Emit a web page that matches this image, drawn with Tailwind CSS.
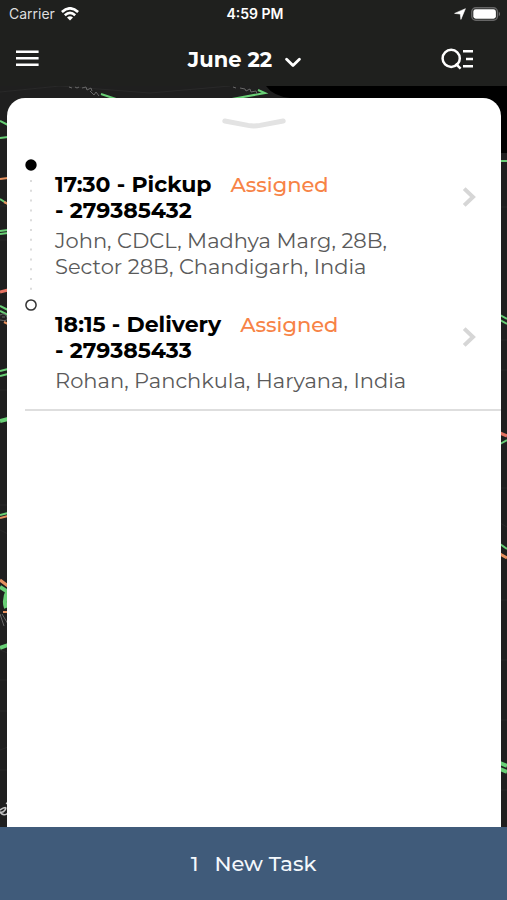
<!DOCTYPE html>
<html lang="en">
<head>
<meta charset="utf-8">
<meta name="viewport" content="width=device-width, initial-scale=1">
<title>Tasks – June 22</title>
<script src="https://cdn.jsdelivr.net/npm/@tailwindcss/browser@4"></script>
</head>
<body class="relative flex min-h-screen flex-col overflow-x-hidden bg-[#1f1f1f] font-[Montserrat,Inter,sans-serif] text-black">

<!-- Map behind the sheet -->
<svg class="absolute inset-0 h-full w-full" viewBox="0 0 507 900" preserveAspectRatio="none" fill="none" aria-hidden="true">
  <path d="M266 86H507V153H500L498 98H290Q273 96 266 86Z" fill="#000"/>
  <path d="M470 88H507V153H470Z" fill="#000"/>
  <g stroke="#292929" stroke-width="1">
    <path d="M0 92 60 86 150 93 230 86M0 206h8M0 240h8M0 316h8M0 390h8M0 505h8M0 530l8 4M0 650l8 3M0 680h8M0 711h8M0 750l8-3M0 770h8M500 207h7M500 340h7M500 370h7M500 488h7M500 523l7 4M500 600h7M500 660h7M500 720h7M500 790h7"/>
  </g>
  <g stroke="#69cf76" stroke-width="2">
    <path d="M101 94l18 6M232 99l33-6-7-3M0 121l8 4M0 138l8-1M0 199l8 5M0 231l8-1M0 234l8-1M0 306l8 4M0 311l8 4M0 371l8-2M0 376l8-2M500 161h7M500 315l7 4M500 320l7 4M500 444l7-4M0 515l8-2M500 544l7 5"/>
    <path d="M0 421l8-2M0 587l8 5M8 590Q3 600 6 608M0 648l8-3M500 763l7 3M500 769l7 3" stroke-width="4"/>
  </g>
  <g stroke="#e6915f" stroke-width="2">
    <path d="M0 179l8-1M4 202l4 2M4 322l4 2M0 518l8-2M3 612h5"/>
    <path d="M0 580l8 6M500 554l7 4" stroke-width="3"/>
    <path d="M0 292l8-2M500 433l7 3" stroke="#e57362" stroke-width="3"/>
  </g>
  <g stroke="#686868" stroke-width="1">
    <path d="M69 87l3 1M75 87l2 1 2-1M82 88l4-1 1 3 4-2 1 3M90 91l4 4 2-3 3 4M233 87l3 1M240 88l5 1 1 2 4-2 1 3 5-1 1 3"/>
    <path d="M0 315q5-3 7 2t-7 3M2 317h3M0 614l4 12M2 614l6 10"/>
  </g>
  <path d="M0 810q8-5 5 0-2 3-5 2 4 5 8 1M6 803l2 1" stroke="#c4c4c4" stroke-width="1.5"/>
</svg>

<header class="relative h-[86px] bg-[#1f201e] text-white">
  <div class="grid h-7 grid-cols-[1fr_auto_1fr] items-center pr-[6px] pl-[9px] font-[Inter,sans-serif] text-[14px] leading-5">
    <div class="flex items-center gap-[6px] text-[#dedede]">
      <span>Carrier</span>
      <svg class="h-[14px] w-[18px]" viewBox="0 0 18 14" fill="none" stroke="#fff" stroke-width="2.6" aria-label="Wi-Fi" role="img">
        <path d="M.9 5Q9-2.4 17.1 5M3.8 8.2q5.2-4.6 10.4 0"/><path d="M6 10.4q3-2.4 6 0L9 13.6Z" fill="#fff" stroke="none"/>
      </svg>
    </div>
    <span class="font-semibold">4:59 PM</span>
    <div class="flex items-center justify-end gap-[5px]">
      <svg class="h-3 w-3" viewBox="0 0 12 12" fill="#fff" stroke="#fff" stroke-width=".6" stroke-linejoin="round" role="img" aria-label="Location"><path d="M11.4.7 6.9 11.4 6.3 6 .6 5.4Z"/></svg>
      <svg class="h-[14px] w-[30px]" viewBox="0 0 30 14" fill="none" role="img" aria-label="Battery"><rect x=".8" y=".8" width="25.6" height="12.4" rx="4" stroke="#666" stroke-width="1.4"/><rect x="2.3" y="2.3" width="22.6" height="9.4" rx="2.4" fill="#fff"/><path d="M27.8 4.5q2.4 2.5 0 5Z" fill="#747474"/></svg>
    </div>
  </div>
  <div class="grid h-[58px] grid-cols-[1fr_auto_1fr] items-start pt-4 pr-[34px] pl-4">
    <button type="button" aria-label="Menu" class="flex h-7 w-6 items-center">
      <svg class="h-4 w-6" viewBox="0 0 24 16" stroke="#fff" stroke-width="2.6"><path d="M0 1.8h22.6M0 8.3h22.6M0 14.7h22.6"/></svg>
    </button>
    <button type="button" class="flex h-8 items-center gap-[13px] text-[21px] leading-7 font-bold">
      June 22
      <svg class="mt-1 h-[11px] w-4" viewBox="0 0 16 11" fill="none" stroke="#fff" stroke-width="2.8" stroke-linecap="round" stroke-linejoin="round" aria-hidden="true"><path d="M1.6 2.2 8 8.6 14.4 2.2"/></svg>
    </button>
    <button type="button" aria-label="Search and filter" class="flex h-[30px] items-center justify-self-end">
      <svg class="h-[22px] w-8" viewBox="0 0 32 22" fill="none" stroke="#fff" stroke-width="2.5"><circle cx="10.2" cy="10.4" r="8.6"/><path d="M14.6 15.6l5 5M22 3.3h10M25 11h7M22 18.3h10"/></svg>
    </button>
  </div>
</header>

<main class="relative mx-[7px] mt-3 mr-[6px] flex-1 rounded-t-[18px] bg-white">
  <button type="button" aria-label="Collapse list" class="mx-auto flex h-[61px] w-16 items-start pt-5">
    <svg class="h-[11px] w-16" viewBox="0 0 64 11" fill="none" stroke="#e3e3e3" stroke-width="5" stroke-linecap="round" stroke-linejoin="round"><path d="M2.8 3 26 7.4q6 1 12 0L61.2 3"/></svg>
  </button>
  <ol class="ml-[18px] border-b-2 border-[#dedede]">
    <li>
      <a href="#279385432" class="flex">
        <span class="flex w-3 shrink-0 flex-col items-center">
          <svg class="h-3 w-3 shrink-0" viewBox="0 0 12 12" aria-hidden="true"><circle cx="6" cy="6" r="5.7"/></svg>
          <svg class="h-32 w-3" viewBox="0 0 12 128" aria-hidden="true"><path d="M6 9v116" stroke="#dcdcdc" stroke-width="2" stroke-dasharray="2 7.8"/></svg>
        </span>
        <span class="ml-[18px] block flex-1 pt-[13px] pb-[19px]">
          <span class="flex gap-[19px] leading-[26px]">
            <strong class="text-[22px] font-bold">17:30 - Pickup<br>- 279385432</strong>
            <span class="text-[21px] font-medium text-[#f78346]">Assigned</span>
          </span>
          <span class="mt-1 block text-[21px] leading-[26px] text-[#5a5a5a]">John, CDCL, Madhya Marg, 28B,<br>Sector 28B, Chandigarh, India</span>
        </span>
        <svg class="mt-7 mr-6 h-5 w-[15px] shrink-0" viewBox="0 0 15 20" fill="none" stroke="#d6d6d6" stroke-width="4" aria-hidden="true"><path d="M2.2 1.6 11 10l-8.8 8.4"/></svg>
      </a>
    </li>
    <li>
      <a href="#279385433" class="flex">
        <span class="w-3 shrink-0">
          <svg class="h-3 w-3" viewBox="0 0 12 12" fill="none" stroke="#333" stroke-width="1.5" aria-hidden="true"><circle cx="6" cy="6" r="5.1"/></svg>
        </span>
        <span class="ml-[18px] block flex-1 pt-[13px] pb-[15px]">
          <span class="flex gap-[19px] leading-[26px]">
            <strong class="text-[22px] font-bold">18:15 - Delivery<br>- 279385433</strong>
            <span class="text-[21px] font-medium text-[#f78346]">Assigned</span>
          </span>
          <span class="mt-1 block text-[21px] leading-[26px] text-[#5a5a5a]">Rohan, Panchkula, Haryana, India</span>
        </span>
        <svg class="mt-7 mr-6 h-5 w-[15px] shrink-0" viewBox="0 0 15 20" fill="none" stroke="#d6d6d6" stroke-width="4" aria-hidden="true"><path d="M2.2 1.6 11 10l-8.8 8.4"/></svg>
      </a>
    </li>
  </ol>
</main>

<button type="button" class="relative flex h-[73px] w-full items-center justify-center gap-4 bg-[#405b7a] text-[21px] leading-7 font-medium text-[#f4f8fc]">
  <span>1</span><span>New Task</span>
</button>
</body>
</html>
